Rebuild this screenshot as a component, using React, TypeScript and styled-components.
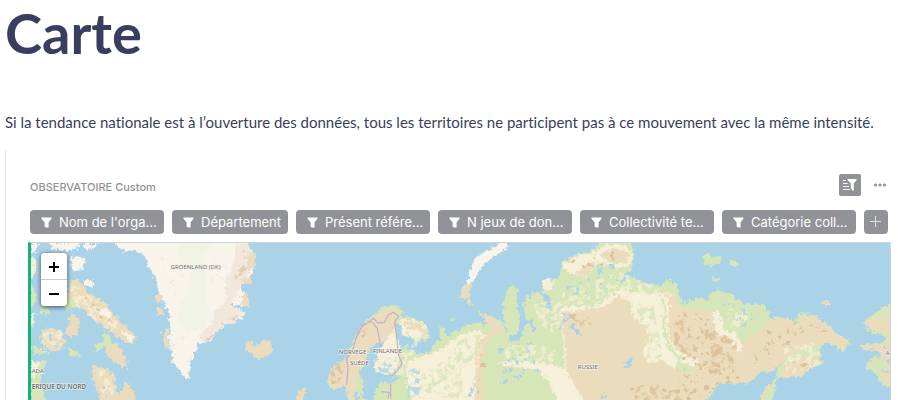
import React from "react";
import styled, { createGlobalStyle } from "styled-components";

const GlobalStyle = createGlobalStyle`
  * { box-sizing: border-box; }
  body { margin: 0; background: #fff; }
  button { font: inherit; border: 0; padding: 0; cursor: pointer; }
`;

const Page = styled.main`
  min-height: 100vh;
  display: flex;
  flex-direction: column;
  padding-left: 5px;
  color: #3a3e5e;
  font-family: Lato, sans-serif;
  font-variant-ligatures: none;
`;

const Title = styled.h1`
  margin: 0;
  font-size: 56px;
  line-height: 66px;
  font-weight: 700;
`;

const Intro = styled.p`
  margin: 44px 0 0;
  font-size: 15px;
  line-height: 24px;
`;

const Widget = styled.section`
  flex: 1;
  display: flex;
  flex-direction: column;
  margin-top: 16px;
  padding: 24px 19px 0 22px;
  border-left: 1px solid #e3e3e5;
  font-family: Inter, sans-serif;
`;

const WidgetHeader = styled.header`
  display: flex;
  align-items: center;
  justify-content: space-between;
  height: 22px;
  padding: 0 4px 0 2px;
`;

const WidgetTitle = styled.h2`
  margin: 0;
  padding-top: 4px;
  color: #929299;
  font-size: 11px;
  line-height: 18px;
  font-weight: 500;
`;

const Actions = styled.div`
  display: flex;
  align-items: center;
  gap: 12px;
`;

const IconButton = styled.button<{ $filled?: boolean }>`
  display: grid;
  place-items: center;
  width: ${(p) => (p.$filled ? 22 : 14)}px;
  height: 22px;
  border-radius: 2px;
  color: ${(p) => (p.$filled ? "#fff" : "#929299")};
  background: ${(p) => (p.$filled ? "#929299" : "transparent")};
`;

const Filters = styled.div`
  display: flex;
  gap: 8px;
  margin-top: 14px;
  padding-left: 2px;
`;

const chip = `
  height: 24px;
  border-radius: 4px;
  color: #fff;
  background: #929299;
`;

const Chip = styled.button<{ $short?: boolean }>`
  ${chip}
  display: flex;
  align-items: center;
  gap: 7px;
  width: ${(p) => (p.$short ? 116 : 134)}px;
  padding-left: 11px;
  font-size: 13px;
  line-height: 24px;
  white-space: nowrap;
`;

const AddFilter = styled.button`
  ${chip}
  display: grid;
  place-items: center;
  width: 24px;
`;

const MapFrame = styled.div`
  position: relative;
  flex: 1;
  min-height: 158px;
  margin-top: 8px;
  border: solid #d3d3d3;
  border-width: 1px 1px 0 3px;
  border-left-color: #16b378;
  overflow: hidden;
  background: #aad3e8;
`;

const MapDrawing = styled.svg`
  display: block;
  width: 100%;
  height: 100%;
  min-height: 157px;
`;

const ZoomControl = styled.div`
  position: absolute;
  top: 10px;
  left: 10px;
  width: 26px;
  border-radius: 4px;
  overflow: hidden;
  background: #fff;
  box-shadow: 0 1px 5px rgba(0, 0, 0, 0.65);
`;

const ZoomButton = styled.button`
  display: grid;
  place-items: center;
  width: 26px;
  height: 26px;
  padding-top: 2px;
  background: #fff;
  color: #000;
  & + & {
    height: 27px;
    border-top: 1px solid #ccc;
  }
`;

const Funnel = () => (
  <svg width="11" height="11" viewBox="0 0 11 11" fill="currentColor" aria-hidden="true">
    <path d="M.5.5h10v1.3L7.6 5.2v5.3H5L3.6 9.4V5.2L.5 1.8Z" />
  </svg>
);

const filters = [
  "Nom de l'orga...",
  "Département",
  "Présent référe...",
  "N jeux de don...",
  "Collectivité te...",
  "Catégorie coll...",
];

const SAND = "#ebdcbd";
const CREAM = "#f7f0d8";
const GREEN = "#d6e6b9";
const ICE = "#f8f3eb";
const BROWN = "#dabd96";
const SEA = "#aad3e8";

const WorldMap = () => (
  <MapDrawing viewBox="33 24 2577 471" preserveAspectRatio="xMinYMin slice" role="img" aria-label="Carte du monde">
    <defs>
      <filter id="coast" filterUnits="userSpaceOnUse" x="0" y="0" width="2640" height="520" colorInterpolationFilters="sRGB">
        <feTurbulence type="fractalNoise" baseFrequency="0.08" numOctaves="3" seed="4" result="n" />
        <feDisplacementMap in="SourceGraphic" in2="n" scale="24" xChannelSelector="R" yChannelSelector="G" />
      </filter>
      <filter id="patchy" filterUnits="userSpaceOnUse" x="0" y="0" width="2640" height="520" colorInterpolationFilters="sRGB">
        <feTurbulence type="fractalNoise" baseFrequency="0.055" numOctaves="4" seed="9" />
        <feColorMatrix values="0 0 0 0 0  0 0 0 0 0  0 0 0 0 0  8 0 0 0 -3.8" result="m" />
        <feComposite in="SourceGraphic" in2="m" operator="in" />
      </filter>
      <filter id="sparse" filterUnits="userSpaceOnUse" x="0" y="0" width="2640" height="520" colorInterpolationFilters="sRGB">
        <feTurbulence type="fractalNoise" baseFrequency="0.06" numOctaves="4" seed="17" />
        <feColorMatrix values="0 0 0 0 0  0 0 0 0 0  0 0 0 0 0  0 10 0 0 -6.1" result="m" />
        <feComposite in="SourceGraphic" in2="m" operator="in" />
      </filter>
    </defs>

    <rect x="0" y="0" width="2640" height="520" fill={SEA} />

    <g filter="url(#coast)">
      {/* Greenland */}
      <path fill={ICE} d="M275 0 300 48 345 46 375 66 390 105 405 130 417 170 430 195 445 235 452 280 447 310 452 340 458 375 475 402 490 420 503 434 511 405 512 375 526 350 532 328 550 322 577 315 600 275 630 268 665 250 682 230 640 222 632 208 660 213 688 216 680 180 662 150 675 130 698 122 705 60 682 40 690 0Z" />
      <path fill="#f0f3e5" d="M475 0 478 60 500 105 518 150 485 200 470 260 500 290 550 280 570 230 555 175 560 110 550 60 590 0Z" />
      <path fill="#f2e7dc" d="M645 24 640 90 615 140 622 200 585 225 572 270 535 305 548 320 575 312 600 275 640 265 680 230 630 215 660 160 690 110 700 50 680 24Z" />
      <g fill={SAND}>
        <path d="m403 180 20 0 5 22-18 0Zm8 35 22 8-2 20-20-6Zm15 73 18-6 5 60-14-4Zm260-228 16-8 5 30-14 22-12-4Zm-22 70 30-8-2 24-20 0Zm-4 50 24 0 4 38-20-8Z" />
      </g>
      {/* Canadian archipelago */}
      <path fill={ICE} d="M90 24h92l-14 20-38 4-35-8ZM190 24h48l-10 14-30 8ZM33 24h22l-8 26-14 10ZM152 70 178 62 196 80 190 102 160 106 152 92ZM188 132 215 136 222 155 196 152Z" />
      <path fill={SAND} d="M146 140 176 130 190 152 206 176 238 188 262 210 280 234 300 260 330 285 350 308 342 330 318 322 300 308 278 300 254 276 220 252 192 226 170 206 142 198 128 180 150 172ZM142 244 166 238 180 265 170 298 148 310 138 288 150 270ZM66 286 104 278 132 302 134 336 96 350 62 332ZM252 330 286 322 306 352 320 380 322 400 290 386 262 362ZM215 394 262 400 288 432 286 462 298 480 318 440 344 470 350 510 240 510 236 470 214 430Z" />
      <path fill={GREEN} d="M248 286 268 298 274 320 300 334 244 338 220 352 228 330 252 318ZM144 336 180 352 176 364 150 366ZM108 180 146 176 174 212 146 224 116 204ZM33 400 60 384 80 378 66 410 60 450 74 480 66 510 33 510ZM33 330 66 340 92 354 42 358ZM58 214 86 220 90 240 56 234ZM33 150 46 164 48 206 33 218Z" />
      <path fill={CREAM} d="M33 64 46 72 44 120 33 130ZM104 174 130 180 140 202 116 196ZM33 376 58 380 50 418 33 430ZM33 230 48 238 40 270 33 276Z" />
      <path fill={ICE} d="m238 220 18-6 22 22-12 14-24-12ZM306 290l28 6 8 24-20-4Z" />
      {/* Iceland and Scotland */}
      <path fill={SAND} d="M676 320 692 322 704 332 726 320 748 318 758 342 744 364 714 372 690 356 676 340ZM834 466 850 460 860 472 850 490 860 510 830 510Z" />

      {/* Eurasia */}
      <path fill={GREEN} d="M920 440 932 405 958 382 984 366 1000 332 1016 290 1034 258 1064 236 1088 216 1120 208 1144 222 1150 244 1180 248 1210 262 1229 288 1220 316 1194 318 1170 304 1148 316 1168 344 1198 350 1222 356 1238 332 1264 312 1250 274 1272 278 1284 304 1320 282 1360 264 1412 272 1390 234 1446 258 1458 286 1464 300 1448 244 1450 198 1466 154 1496 158 1494 208 1512 248 1500 300 1520 270 1508 220 1520 184 1550 168 1576 194 1594 206 1568 164 1566 134 1614 132 1624 84 1668 58 1700 54 1730 36 1740 0 1820 0 1842 50 1840 88 1800 140 1830 128 1880 142 1928 150 1938 132 1970 146 1976 184 1994 208 2012 190 2068 194 2076 164 2112 168 2140 182 2178 208 2230 206 2246 234 2254 264 2266 244 2294 246 2326 264 2336 234 2382 240 2420 264 2446 290 2466 306 2490 312 2488 328 2468 350 2444 330 2418 320 2400 345 2406 384 2380 396 2340 426 2270 430 2264 464 2244 510 2208 510 2232 464 2268 430 2276 390 2246 414 2220 406 2186 446 2096 444 2050 510 1110 510 1020 520 1010 470 980 470 984 510 984 462 960 450 940 466Z" />
      <path fill={SAND} d="M922 438 940 398 980 370 1010 300 1040 258 1084 234 1124 220 1140 240 1120 260 1130 300 1132 350 1080 340 1044 340 1024 400 1008 450 1004 510 984 510 978 450 940 462Z" />
      <path fill={CREAM} d="M1084 336 1126 280 1150 250 1210 264 1226 290 1216 310 1180 306 1156 290 1140 330 1130 400 1090 424 1060 400 1068 360ZM1160 380 1250 350 1320 300 1370 284 1402 300 1390 340 1370 380 1368 510 1180 510 1160 440Z" />
      <path fill={SAND} d="M1150 256 1204 266 1226 292 1212 308 1190 284 1156 272Z" />
      <path fill={CREAM} d="M1430 384 1510 376 1570 384 1634 400 1660 450 1700 510 1620 510 1590 450 1560 404 1480 396ZM1566 136 1606 134 1590 166 1570 166ZM1626 90 1680 60 1710 60 1760 28 1816 30 1840 66 1830 92 1780 100 1730 86 1700 124 1650 118ZM1620 216 1740 210 1800 166 1920 180 1960 200 1980 250 1960 510 1670 510 1634 400Z" />
      <path fill={SAND} d="M1386 240 1420 248 1448 280 1430 296 1396 326 1390 400 1392 510 1366 510 1366 370 1376 324 1414 286ZM1626 234 1700 220 1750 216 1804 176 1828 188 1834 240 1870 270 1890 300 1868 350 1880 382 1930 374 1956 398 1990 410 2010 450 1994 510 1700 510 1644 420 1632 320ZM1680 98 1730 76 1704 120 1666 118ZM1740 56 1794 38 1830 54 1820 84 1770 82Z" />
      <path fill={SAND} d="M1922 166 1966 178 1984 224 2012 222 2082 228 2094 274 2120 290 2150 300 2160 346 2174 310 2230 282 2256 250 2300 248 2330 272 2344 240 2398 250 2440 290 2484 318 2468 344 2434 320 2410 328 2364 326 2330 356 2298 370 2256 406 2230 400 2186 444 2096 446 2050 510 1960 510 1980 440 2022 386 1966 366 1942 310 1940 230ZM2294 386 2350 362 2402 372 2394 390 2330 424 2288 428ZM2260 434 2244 466 2230 510 2214 510 2236 462Z" />
      {/* River valleys */}
      <path fill="none" stroke={CREAM} strokeWidth="22" d="M1920 180 1940 210 1930 270 1945 330 1980 366 2030 385M2085 230 2100 290 2140 306 2162 348" />
      <path fill="none" stroke={GREEN} strokeWidth="10" d="M1924 190 1936 230 1930 280 1950 340 1984 374" />

      {/* Novaya Zemlya */}
      <path fill={ICE} d="M1440 0 1436 28 1400 46 1366 68 1348 110 1342 146 1356 146 1374 112 1390 86 1424 62 1462 40 1466 0Z" />
      <path fill={SAND} d="M1338 146 1324 170 1320 188 1340 192 1344 208 1358 212 1346 182 1354 146Z" />
      {/* Arctic islands */}
      <path fill={GREEN} d="M2050 62 2064 52 2074 70 2094 62 2108 66 2104 84 2070 90 2054 94ZM2126 76 2158 84 2160 92 2136 92ZM2078 124 2094 128 2100 140 2078 140ZM1372 226 1392 236 1384 240ZM1286 250l14-4 0 10Z" />
      <path fill={SAND} d="M2402 206 2414 194 2430 200 2426 208Z" />
      {/* Alaska */}
      <path fill={GREEN} d="M2640 200 2584 220 2560 240 2530 262 2548 286 2580 296 2600 310 2574 324 2522 330 2530 348 2562 342 2584 360 2544 376 2536 400 2570 420 2586 454 2612 450 2640 460Z" />
      <path fill={SAND} d="M2640 242 2564 246 2532 264 2552 284 2590 296 2640 304ZM2524 330 2580 328 2640 316 2640 440 2600 450 2584 430 2600 380 2576 346 2530 346Z" />
      {/* Baltic, White Sea and northern lakes */}
      <g fill={SEA}>
        <path d="M1046 500 1026 480 1034 440 1016 414 1030 394 1050 348 1070 324 1094 320 1074 352 1060 376 1064 410 1104 420 1140 428 1120 442 1080 444 1064 480ZM1124 264 1140 270 1150 310 1174 326 1206 344 1190 354 1156 330 1138 330 1130 300Z" />
        <path d="M1728 92l20-6 2 28-14 6ZM1758 90l34-6-14 18Z" />
        <path d="m1812 376 26-4-2 12-16 20-8-6 10-12Zm-66 98 14 10-4 8-16-2ZM1358 438l6 10-12 40-14-4 18-18Z" />
        <path d="M1622 228l8 16 26-6 4 10-24 12-16 18 0-10 22-20Zm36 40 20 18 14 24-14-8-12-18-22-4Z" />
      </g>
      {/* Ob, Taz and Yenisei gulfs */}
      <path fill="none" stroke={SEA} strokeWidth="15" strokeLinejoin="round" d="M1502 150 1498 200 1508 240 1502 290 1492 308 1468 312M1506 262 1532 260 1544 288M1524 156 1530 184M1582 184 1588 226" />
    </g>

    <g filter="url(#patchy)" opacity=".75">
      <g fill={CREAM}>
        <path d="M1330 330 1390 320 1370 420 1320 480 1180 480 1200 400ZM1540 210 1620 190 1640 220 1610 300 1560 270ZM1460 330 1560 330 1620 350 1600 380 1450 370ZM1630 170 1800 110 1960 180 1900 220 1800 190 1700 210 1620 205ZM1070 350 1150 300 1220 270 1150 420 1080 420ZM2120 220 2190 230 2180 270 2130 280ZM2290 340 2400 320 2400 390 2300 420Z" />
        <path d="M66 280 130 286 126 330 70 340ZM150 140 260 220 300 270 270 290 150 200ZM224 404 280 410 280 480 250 490Z" />
      </g>
      <path fill={GREEN} d="M1300 320 1400 290 1370 360 1310 420ZM1190 430 1310 350 1340 490 1180 490ZM1720 80 1790 80 1770 120 1710 120ZM1820 200 1900 210 1930 370 1880 370 1890 300 1840 250Z" />
      <g fill={BROWN}>
        <path d="M1966 240 1990 240 1992 320 2030 350 2012 366 1960 340ZM2050 276 2070 270 2110 340 2140 370 2146 420 2090 420 2044 400 2060 340ZM2100 290 2150 320 2150 350 2110 320ZM1640 236 1700 238 1716 268 1690 280ZM1920 470 2000 460 2020 490 1960 510 1920 500ZM1830 460 1900 440 1950 470 1900 510 1850 500ZM932 410 960 376 976 390 960 440 935 450ZM1000 290 1040 256 1060 260 1030 310Z" />
      </g>
      <path fill={SEA} d="M1070 372 1130 366 1126 418 1072 410ZM1160 410 1200 390 1200 480 1160 490ZM1140 300 1180 310 1170 350 1140 350Z" />
      <path fill="#dec3a0" d="M650 140 680 110 690 60 668 44 672 90 640 120ZM600 262 660 238 640 258 610 272ZM550 310 590 296 576 314 552 318Z" />
    </g>

    <g filter="url(#sparse)" opacity=".85">
      <path fill={BROWN} d="M1980 230 2080 240 2140 390 2160 430 1980 510 1970 370ZM2220 290 2330 260 2440 280 2380 310 2260 370 2190 390ZM2310 380 2380 380 2330 410ZM1385 300 1410 290 1390 450 1372 480ZM1650 70 1820 40 1800 80 1660 110ZM230 410 280 420 280 490ZM190 180 290 270 230 246Z" />
      <path fill={SEA} d="M1430 340 1540 320 1560 420 1440 450ZM1640 130 1840 120 1780 160 1640 190ZM2100 200 2230 220 2170 290ZM60 290 140 270 130 340 66 340ZM224 410 280 410 280 490 240 490ZM2550 340 2610 330 2610 440 2560 410Z" />
      <path fill="#f4e9df" d="M420 60 490 80 500 170 450 200ZM450 290 510 300 500 390 460 360ZM580 60 640 50 620 130 570 200Z" />
    </g>

    <g fill="none" stroke="#c5b3c8" strokeWidth="4" strokeLinejoin="round">
      <path d="M980 450 984 400 980 370 1000 340 1008 310 1026 274 1050 258 1060 250 1074 264 1094 262 1104 240 1120 232 1136 244 1124 260 1130 310 1136 360 1146 386 1130 410 1114 424M1058 262 1072 280 1082 334M1112 446v44M1084 470l24 2-4 18" />
    </g>

    <g fontFamily="Noto Sans, sans-serif" fontSize="18" fill="#716d73" stroke="#f8f5ef" strokeWidth="4" strokeOpacity=".75" paintOrder="stroke">
      <text x="452" y="101">GROENLAND (DK)</text>
      <text x="956" y="357">NORVÈGE</text>
      <text x="990" y="389">SUÈDE</text>
      <text x="1059" y="354">FINLANDE</text>
      <text x="1673" y="402">RUSSIE</text>
      <text x="35" y="414">ADA</text>
      <text x="35" y="462" fontSize="19" fontWeight="600">ERIQUE DU NORD</text>
      <text x="2597" y="361">A</text>
    </g>
  </MapDrawing>
);

export default function App() {
  return (
    <>
      <GlobalStyle />
      <Page>
        <Title>Carte</Title>
        <Intro>
          Si la tendance nationale est à l’ouverture des données, tous les territoires ne participent pas à ce mouvement avec la même intensité.
        </Intro>
        <Widget>
          <WidgetHeader>
            <WidgetTitle>OBSERVATOIRE Custom</WidgetTitle>
            <Actions>
              <IconButton $filled aria-label="Trier et filtrer">
                <svg width="16" height="14" viewBox="0 0 16 14" aria-hidden="true">
                  <path d="M1 2.5h3M1 5.5h4.5M1 8.5h6M1 11.5h7" stroke="currentColor" strokeWidth="1" fill="none" />
                  <path d="M5.5 1h9.2v1L11.8 5.5v7.2H10.6L8.8 10V5.5L5.5 2Z" fill="currentColor" />
                </svg>
              </IconButton>
              <IconButton aria-label="Plus d'options">
                <svg width="14" height="4" viewBox="0 0 14 4" fill="currentColor" aria-hidden="true">
                  <circle cx="2.5" cy="2" r="1.6" />
                  <circle cx="7" cy="2" r="1.6" />
                  <circle cx="11.5" cy="2" r="1.6" />
                </svg>
              </IconButton>
            </Actions>
          </WidgetHeader>
          <Filters>
            {filters.map((label) => (
              <Chip key={label} $short={label === "Département"}>
                <Funnel />
                {label}
              </Chip>
            ))}
            <AddFilter aria-label="Ajouter un filtre">
              <svg width="12" height="12" viewBox="0 0 12 12" stroke="#e4e4e6" aria-hidden="true">
                <path d="M5.5 0v11M0 5.5h11" />
              </svg>
            </AddFilter>
          </Filters>
          <MapFrame>
            <WorldMap />
            <ZoomControl>
              <ZoomButton aria-label="Zoom avant">
                <svg width="10" height="10" viewBox="0 0 10 10" stroke="currentColor" strokeWidth="2" aria-hidden="true">
                  <path d="M5 0v10M0 5h10" />
                </svg>
              </ZoomButton>
              <ZoomButton aria-label="Zoom arrière">
                <svg width="10" height="10" viewBox="0 0 10 10" stroke="currentColor" strokeWidth="2" aria-hidden="true">
                  <path d="M0 5h10" />
                </svg>
              </ZoomButton>
            </ZoomControl>
          </MapFrame>
        </Widget>
      </Page>
    </>
  );
}
